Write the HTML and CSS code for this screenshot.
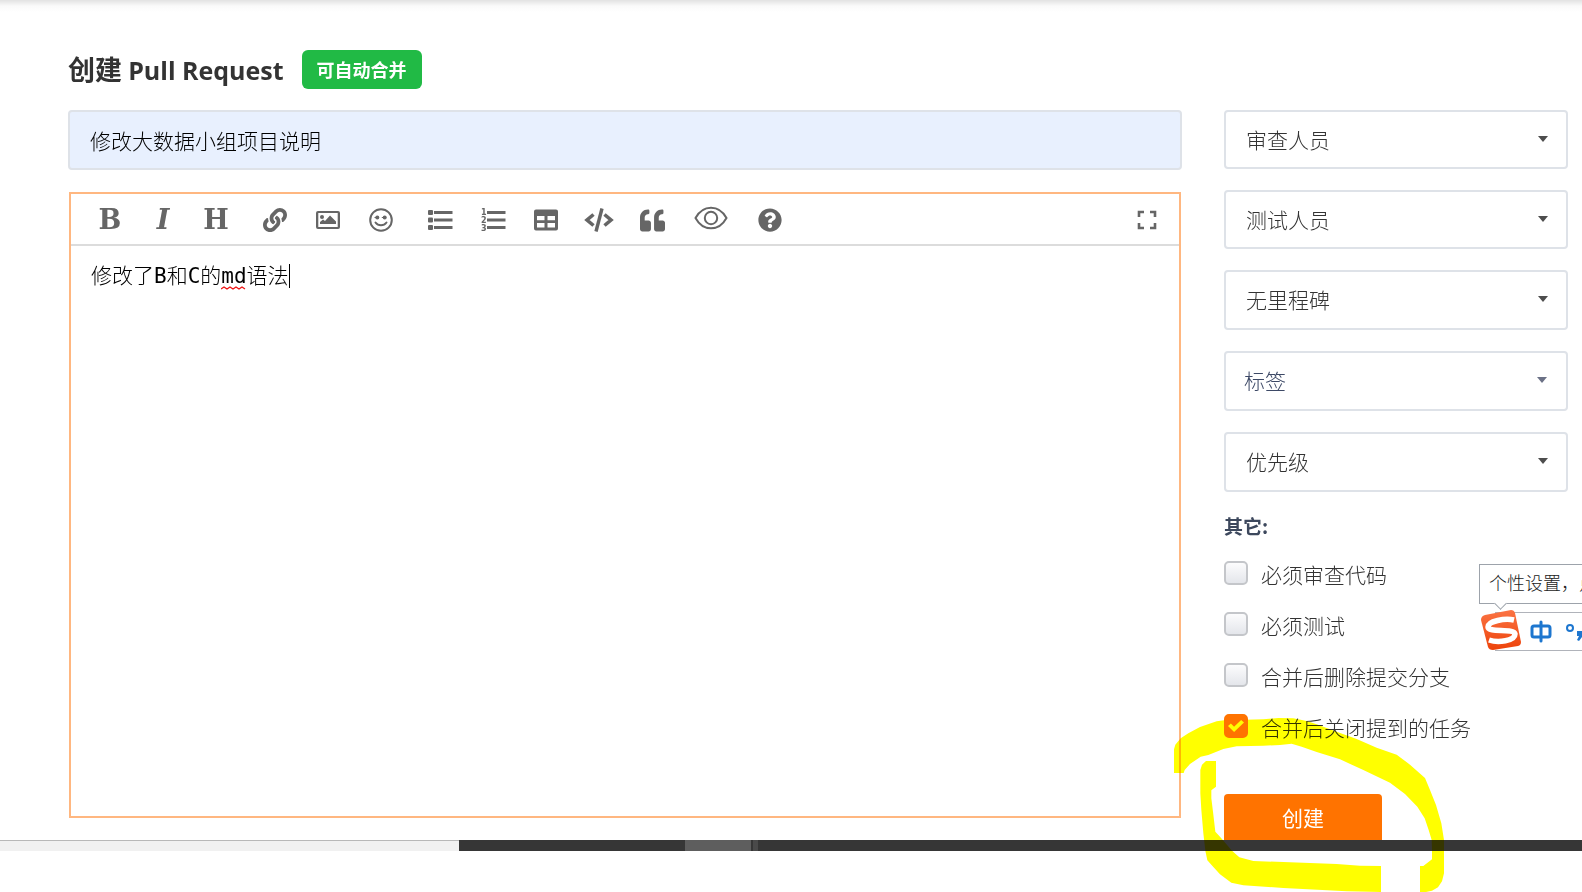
FILE: index.html
```html
<!DOCTYPE html>
<html lang="zh-CN">
<head>
<meta charset="utf-8">
<meta name="viewport" content="width=device-width, initial-scale=1">
<title>创建 Pull Request</title>
<link rel="stylesheet" href="styles.css">
</head>
<body>
<main class="page">
  <header class="page-head">
    <h1 class="title">创建 <span class="latin">Pull Request</span></h1>
    <span class="badge">可自动合并</span>
  </header>
  <form class="layout">
    <section class="content">
      <input class="title-input" type="text" aria-label="标题" value="修改大数据小组项目说明">
      <div class="editor">
        <div class="toolbar">
          <div class="group">
            <button type="button" class="tool letter" aria-label="粗体">B</button>
            <button type="button" class="tool letter italic" aria-label="斜体">I</button>
            <button type="button" class="tool letter" aria-label="标题">H</button>
          </div>
          <div class="group">
            <button type="button" class="tool" aria-label="链接"><svg width="24" height="24" viewBox="0 0 512 512"><path d="M326.612 185.391c59.747 59.809 58.927 155.698.36 214.59-.11.12-.24.25-.36.37l-67.2 67.2c-59.27 59.27-155.699 59.262-214.96 0-59.27-59.26-59.27-155.7 0-214.96l37.106-37.106c9.84-9.84 26.786-3.3 27.294 10.606.648 17.722 3.826 35.527 9.69 52.721 1.986 5.822.567 12.262-3.783 16.612l-13.087 13.087c-28.026 28.026-28.905 73.66-1.155 101.96 28.024 28.579 74.086 28.749 102.325.51l67.2-67.19c28.191-28.191 28.073-73.757 0-101.83-3.701-3.694-7.429-6.564-10.341-8.569a16.037 16.037 0 0 1-6.947-12.606c-.396-10.567 3.348-21.456 11.698-29.806l21.054-21.055c5.521-5.521 14.182-6.199 20.584-1.731a152.482 152.482 0 0 1 20.522 17.197zM467.547 44.449c-59.261-59.262-155.69-59.27-214.96 0l-67.2 67.2c-.12.12-.25.25-.36.37-58.566 58.892-59.387 154.781.36 214.59a152.454 152.454 0 0 0 20.521 17.196c6.402 4.468 15.064 3.789 20.584-1.731l21.054-21.055c8.35-8.35 12.094-19.239 11.698-29.806a16.037 16.037 0 0 0-6.947-12.606c-2.912-2.005-6.64-4.875-10.341-8.569-28.073-28.073-28.191-73.639 0-101.83l67.2-67.19c28.239-28.239 74.3-28.069 102.325.51 27.75 28.3 26.872 73.934-1.155 101.96l-13.087 13.087c-4.35 4.35-5.769 10.79-3.783 16.612 5.864 17.194 9.042 34.999 9.69 52.721.509 13.906 17.454 20.446 27.294 10.606l37.106-37.106c59.271-59.259 59.271-155.699.001-214.959z"/></svg></button>
            <button type="button" class="tool" aria-label="图片"><svg width="24" height="24" viewBox="0 0 24 24"><path fill-rule="evenodd" d="M2 3h20a2 2 0 0 1 2 2v14a2 2 0 0 1-2 2H2a2 2 0 0 1-2-2V5a2 2 0 0 1 2-2zm.3 2v14h19.4V5z"/><circle cx="6" cy="9" r="2"/><path d="M4 16v-2l3-2.500 2 1.500 5-5.500 6 6V16z"/></svg></button>
            <button type="button" class="tool" aria-label="表情"><svg width="24" height="24" viewBox="0 0 24 24"><circle cx="12" cy="12" r="10.800" fill="none" stroke="currentColor" stroke-width="2"/><circle cx="8.300" cy="9.500" r="2"/><circle cx="15.700" cy="9.500" r="2"/><path d="M5.500 9.500h2M12.800 9.500h2" stroke="currentColor"/><path d="M6.500 14.500c2.800 3.700 8.200 3.700 11 0" fill="none" stroke="currentColor" stroke-width="2" stroke-linecap="round"/></svg></button>
          </div>
          <div class="group">
            <button type="button" class="tool" aria-label="无序列表"><svg width="26" height="24" viewBox="0 0 26 24"><rect x="1" y="2" width="5" height="5" rx="1"/><rect x="1" y="9.500" width="5" height="5" rx="1"/><rect x="1" y="17" width="5" height="5" rx="1"/><path d="M7 3h18.500v3H7zM7 10.500h18.500v3H7zM7 18h18.500v3H7z"/></svg></button>
            <button type="button" class="tool" aria-label="有序列表"><svg width="26" height="24" viewBox="0 0 26 24"><text class="digit" x="1" y="7">1</text><text class="digit" x="1" y="15">2</text><text class="digit" x="1" y="23">3</text><path d="M7 3h18.500v3H7zM7 10.500h18.500v3H7zM7 18h18.500v3H7z"/></svg></button>
            <button type="button" class="tool" aria-label="表格"><svg width="24" height="24" viewBox="0 0 24 24"><path fill-rule="evenodd" d="M2 1.500h20a2 2 0 0 1 2 2v17a2 2 0 0 1-2 2H2a2 2 0 0 1-2-2v-17a2 2 0 0 1 2-2zM3 8v4.300h7.500V8zm10.500 0v4.300H21V8zM3 15v4.500h7.500V15zm10.500 0v4.500H21V15z"/></svg></button>
            <button type="button" class="tool" aria-label="代码"><svg width="30" height="24" viewBox="0 0 30 24"><path d="M9.500 6.500 3 12l6.500 5.500M20.500 6.500 27 12l-6.500 5.500" fill="none" stroke="currentColor" stroke-width="3.600"/><path d="M18 .5 12 23.500" stroke="currentColor" stroke-width="3.400"/></svg></button>
            <button type="button" class="tool" aria-label="引用"><svg width="25" height="25" viewBox="0 0 512 512"><path d="M464 256h-80v-64c0-35.300 28.700-64 64-64h8c13.300 0 24-10.700 24-24V56c0-13.300-10.700-24-24-24h-8c-88.400 0-160 71.600-160 160v240c0 26.500 21.500 48 48 48h128c26.500 0 48-21.500 48-48V304c0-26.500-21.500-48-48-48zm-288 0H96v-64c0-35.300 28.700-64 64-64h8c13.300 0 24-10.700 24-24V56c0-13.300-10.700-24-24-24h-8C71.600 32 0 103.600 0 192v240c0 26.500 21.500 48 48 48h128c26.500 0 48-21.500 48-48V304c0-26.500-21.500-48-48-48z"/></svg></button>
          </div>
          <div class="group">
            <button type="button" class="tool" aria-label="预览"><svg width="34" height="28" viewBox="0 0 34 28"><g fill="none" stroke="currentColor" stroke-width="2"><path d="M1.500 12C9-1.700 25-1.700 32.500 12 25 25.700 9 25.700 1.500 12z"/><circle cx="17" cy="12" r="6.200"/></g></svg></button>
          </div>
          <div class="group">
            <button type="button" class="tool" aria-label="帮助"><svg width="24" height="24" viewBox="0 0 512 512"><path d="M504 256c0 136.997-111.043 248-248 248S8 392.997 8 256C8 119.083 119.043 8 256 8s248 111.083 248 248zM262.655 90c-54.497 0-89.255 22.957-116.549 63.758-3.536 5.286-2.353 12.415 2.715 16.258l34.699 26.310c5.205 3.947 12.621 3.008 16.665-2.122 17.864-22.658 30.113-35.797 57.303-35.797 20.429 0 45.698 13.148 45.698 32.958 0 14.976-12.363 22.667-32.534 33.976C247.128 238.528 216 254.941 216 296v4c0 6.627 5.373 12 12 12h56c6.627 0 12-5.373 12-12v-1.333c0-28.462 83.186-29.647 83.186-106.667 0-58.002-60.165-102-116.531-102zM256 338c-25.365 0-46 20.635-46 46 0 25.364 20.635 46 46 46s46-20.636 46-46c0-25.364-20.635-46-46-46z"/></svg></button>
          </div>
          <button type="button" class="tool expand" aria-label="全屏"><svg width="20" height="20" viewBox="0 0 20 20"><path d="M2 7V2h5M13 2h5v5M18 13v5h-5M7 18H2v-5" fill="none" stroke="currentColor" stroke-width="2.600"/></svg></button>
        </div>
        <div class="text-wrap">
          <textarea class="text" aria-label="说明" spellcheck="false">修改了B和C的md语法</textarea>
          <svg class="squiggle" width="25" height="4" viewBox="0 0 25 4"><path d="M0 3 3 1l3 2 3-2 3 2 3-2 3 2 3-2 3 2" fill="none" stroke="#e11" stroke-width="1.300"/></svg>
          <span class="caret"></span>
        </div>
      </div>
    </section>
    <aside class="side">
      <div class="fields">
        <div class="field"><select aria-label="审查人员"><option>审查人员</option></select><span class="arrow"></span></div>
        <div class="field"><select aria-label="测试人员"><option>测试人员</option></select><span class="arrow"></span></div>
        <div class="field tall"><select aria-label="里程碑"><option>无里程碑</option></select><span class="arrow"></span></div>
        <div class="field tall tags"><select aria-label="标签"><option>标签</option></select><span class="arrow"></span></div>
        <div class="field tall"><select aria-label="优先级"><option>优先级</option></select><span class="arrow"></span></div>
      </div>
      <h2 class="other">其它:</h2>
      <div class="checks">
        <label class="check"><input type="checkbox">必须审查代码</label>
        <label class="check"><input type="checkbox">必须测试</label>
        <label class="check"><input type="checkbox">合并后删除提交分支</label>
        <label class="check"><input type="checkbox" checked>合并后关闭提到的任务</label>
      </div>
      <button type="submit" class="submit">创建</button>
      <svg class="marker" width="320" height="202" viewBox="0 0 960 606"><path fill="#ff0" d="M72 249V178L76 164 92 145 115 130 150 111 200 94 222 91 260 90 340 88 385 84 430 85 470 93 500 103 560 125 620 147 680 173 740 194 780 224 825 264 840 300 858 345 874 400 882 450V550L876 574 864 592 846 602 828 606H810V528H820L846 508V482L845 450 836 420 824 385 802 350 765 312 720 278 640 240 570 208 500 186 455 170 425 161 390 165 340 167 260 169 220 177 175 195 152 200 120 222 104 240 101 249ZM151 240 156 224 168 213H198V290L184 301V325L189 365 196 425 210 440 246 482 268 502 310 513 560 522 630 527 693 528V606L590 604 400 594 280 586 244 578 210 553 190 531 172 511 166 482 160 430 154 360 151 310Z"/></svg>
    </aside>
  </form>
</main>
<div class="taskbar"><span class="search"></span><span class="apps"><span class="active"></span><span class="stack"></span></span></div>
<div class="ime">
  <div class="tip">个性设置，点</div>
  <div class="ime-bar">
    <svg width="103" height="46" viewBox="0 0 103 46">
      <defs><linearGradient id="g" x2="0" y2="1"><stop stop-color="#fb7444"/><stop offset="1" stop-color="#ed430a"/></linearGradient></defs>
      <path d="M6 7 32 2q3 0 4 3l6 29q0 3-3 4L14 42q-4 0-5-3L2 12q0-4 4-5z" fill="url(#g)"/>
      <path d="M35 12C26 10 9 13 9 19c0 6 26 1 27 7 0 7-17 9-26 6" fill="none" stroke="#fff" stroke-width="5.500"/>
      <rect x="53" y="18" width="18" height="11" rx="2" fill="none" stroke="#1d76cf" stroke-width="3"/>
      <path d="M62 14v19" fill="none" stroke="#1d76cf" stroke-width="3" stroke-linecap="round"/>
      <circle cx="91" cy="20" r="3" fill="none" stroke="#1d76cf" stroke-width="2"/>
      <path d="M98 23h5v6l-3 4-2-1 2-4h-2z" fill="#1d76cf"/>
    </svg>
  </div>
</div>
</body>
</html>
```
FILE: styles.css
```css
* { box-sizing: border-box; }
body {
  margin: 0;
  min-height: 100vh;
  background: #fff;
  color: #333;
  font: 300 21px/30px "Noto Sans CJK SC", sans-serif;
}
button, input, select, textarea { font: inherit; color: inherit; margin: 0; }
.page {
  padding: 50px 14px 0 68px;
  background: linear-gradient(#e2e2e2, #fafafa 6px, #fff 12px);
}
.page-head { display: flex; align-items: center; gap: 18px; margin-bottom: 21px; }
.title { margin: 0; font-size: 27px; line-height: 38px; font-weight: 700; }
.latin { font-family: "Open Sans", sans-serif; font-size: 25px; }
.badge {
  padding: 0 15px;
  border-radius: 6px;
  background: #21ba45;
  color: #fff;
  font-size: 18px;
  font-weight: 700;
  line-height: 39px;
}
.layout { display: grid; grid-template-columns: minmax(0, 1fr) 344px; gap: 42px; }
.content { display: flex; flex-direction: column; gap: 22px; padding-bottom: 22px; }
.title-input {
  width: 100%;
  height: 60px;
  padding: 0 20px;
  border: 2px solid #dee2e8;
  border-radius: 4px;
  background: #e8f0fe;
  color: #000;
}
.editor { flex: 1; display: flex; flex-direction: column; margin: 0 1px; border: 2px solid #ffb780; }
.toolbar {
  display: flex;
  align-items: center;
  gap: 7px;
  height: 52px;
  padding: 2px 6px 0 13px;
  border-bottom: 2px solid #dcdcdc;
}
.group { display: flex; gap: 1px; }
.tool {
  display: flex;
  align-items: center;
  justify-content: center;
  width: 52px;
  height: 48px;
  padding: 0;
  border: 0;
  background: none;
  color: #666;
}
.tool svg { fill: currentColor; }
.letter { font: 700 27px/48px "DejaVu Serif", serif; }
.italic { font-style: italic; }
.digit { font: 700 8px "DejaVu Sans", sans-serif; }
.expand { margin-left: auto; }
.text-wrap { flex: 1; display: flex; position: relative; }
.text {
  flex: 1;
  padding: 15px 20px;
  border: 0;
  outline: 0;
  resize: none;
  background: none;
  color: #000;
  font-family: "DejaVu Sans Mono", "Noto Sans CJK SC", monospace;
}
.squiggle { position: absolute; left: 150px; top: 40px; }
.caret { position: absolute; left: 218px; top: 18px; width: 1px; height: 24px; background: #000; }
.side { position: relative; }
.fields { display: grid; gap: 21px; }
.field { position: relative; height: 59px; }
.tall { height: 60px; }
.field select {
  width: 100%;
  height: 100%;
  padding: 0 20px 2px;
  appearance: none;
  border: 2px solid #dee2e8;
  border-radius: 4px;
  background: #fff;
}
.arrow {
  position: absolute;
  right: 20px;
  top: 26px;
  border: 5px solid transparent;
  border-top: 6px solid #4d4d4d;
  border-bottom: 0;
}
.tags select { padding-left: 18px; color: #3d4966; }
.tags .arrow { right: 21px; border-top-color: #6b7186; }
.other { margin: 19px 0 20px; font-size: 19px; line-height: 30px; font-weight: 700; color: #3d485d; }
.checks { display: grid; gap: 25px; }
.check { display: flex; align-items: flex-start; gap: 13px; line-height: 26px; }
.check input {
  width: 24px;
  height: 24px;
  appearance: none;
  border: 2px solid #c4c6ca;
  border-radius: 5px;
  background: linear-gradient(#fcfcfd, #e4e6eb);
}
.check input:checked { display: grid; place-items: center; border-color: #ff7300; background: #ff7300; }
.check input:checked::before {
  content: "";
  width: 16px;
  height: 12px;
  background: #fff;
  clip-path: polygon(0 50%, 18% 30%, 38% 56%, 82% 0, 100% 20%, 38% 100%);
}
.submit {
  display: block;
  width: 158px;
  height: 46px;
  margin-top: 54px;
  border: 0;
  border-radius: 4px 4px 0 0;
  background: #ff7300;
  color: #fff;
  font-weight: 400;
}
.marker { position: absolute; left: -74px; bottom: -52px; mix-blend-mode: multiply; pointer-events: none; }
.taskbar { display: flex; height: 11px; background: #363636; }
.search { width: 29%; background: #f1f1f1; border-top: 1px solid #b8b8b8; }
.apps { flex: 1; display: flex; gap: 2px; padding-left: 226px; }
.active { width: 66px; background: #5e5e5e; }
.stack { width: 5px; background: #4a4a4a; }
.ime { position: absolute; right: 0; top: 564px; width: 103px; height: 90px; overflow: hidden; color: #222; }
.tip {
  height: 40px;
  width: 130px;
  padding: 0 9px;
  border: 1px solid #9da3ab;
  background: #fff;
  font-size: 18px;
  font-weight: 300;
  line-height: 34px;
  white-space: nowrap;
}
.tip::after {
  content: "";
  position: absolute;
  left: 17px;
  top: 35px;
  width: 8px;
  height: 8px;
  border: solid #9da3ab;
  border-width: 0 1px 1px 0;
  background: #fff;
  transform: rotate(45deg);
}
.ime-bar {
  display: flex;
  height: 39px;
  margin-top: 8px;
  background: linear-gradient(#b0b3ba, #b0b3ba) 16px 0 / 100% 1px no-repeat, linear-gradient(#b0b3ba, #b0b3ba) 16px 100% / 100% 1px no-repeat;
}
.ime-bar svg { margin-top: -4px; flex: none; }
```
